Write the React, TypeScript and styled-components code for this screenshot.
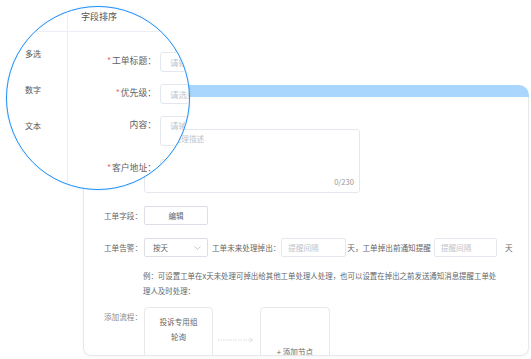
import React from "react";
import styled, { createGlobalStyle } from "styled-components";

const Global = createGlobalStyle`
  html, body { margin: 0; padding: 0; background: #fff; }
  body { font-family: "Noto Sans CJK SC", "Noto Sans", sans-serif; }
  * { box-sizing: border-box; }
`;

const Stage = styled.div`
  position: relative;
  width: 531px;
  height: 359px;
  overflow: hidden;
  padding: 85px 0 0 83px;
`;

const Card = styled.div`
  width: 446px;
  display: flex;
  flex-direction: column;
`;

const CardBar = styled.div`
  height: 12px;
  background: #a9d6fd;
  border-radius: 10px 10px 0 0;
`;

const CardBody = styled.div`
  height: 259px;
  border: 1px solid #e8e8e8;
  border-top: none;
  border-radius: 0 0 8px 8px;
  box-shadow: 0 1px 3px rgba(0, 0, 0, 0.04);
  overflow: hidden;
  padding-top: 32px;
  display: flex;
  flex-direction: column;
  font-size: 7.6px;
  color: #666;
`;

const Row = styled.div<{ $top?: number }>`
  display: flex;
  align-items: flex-start;
  margin-top: ${(p) => p.$top ?? 0}px;
  white-space: nowrap;
`;

const Label = styled.div<{ $muted?: boolean; $lh?: number }>`
  width: 60px;
  flex: none;
  text-align: right;
  padding-right: 2px;
  line-height: ${(p) => p.$lh ?? 19}px;
  color: ${(p) => (p.$muted ? "#8a8a8a" : "#666")};
`;

const TextArea = styled.div`
  width: 216px;
  height: 64px;
  border: 1px solid #e4e7ed;
  border-radius: 3px;
  padding: 3px 5px 5px 6px;
  display: flex;
  flex-direction: column;
  justify-content: space-between;
  line-height: 11px;
`;

const Placeholder = styled.span`
  color: #c0c4cc;
`;

const Counter = styled.span`
  align-self: flex-end;
  color: #999;
`;

const Button = styled.div`
  width: 64px;
  height: 19px;
  border: 1px solid #dcdfe6;
  border-radius: 2px;
  display: flex;
  align-items: center;
  justify-content: center;
  color: #666;
`;

const Select = styled.div`
  width: 64px;
  height: 19px;
  border: 1px solid #dcdfe6;
  border-radius: 2px;
  display: flex;
  align-items: center;
  justify-content: space-between;
  padding: 0 6px 0 8px;
  color: #666;
`;

const InlineText = styled.span<{ $ml: number }>`
  line-height: 19px;
  margin-left: ${(p) => p.$ml}px;
  color: #666;
`;

const Input = styled.div<{ $w: number; $ml: number }>`
  width: ${(p) => p.$w}px;
  margin-left: ${(p) => p.$ml}px;
  height: 19px;
  border: 1px solid #e4e7ed;
  border-radius: 2px;
  padding-left: 6px;
  line-height: 17px;
  color: #c0c4cc;
`;

const Note = styled.div`
  margin-top: 11px;
  padding-left: 59px;
  line-height: 15px;
  font-size: 7.45px;
  white-space: nowrap;
  color: #666;
`;

const Node = styled.div<{ $w: number; $ml?: number; $center?: boolean }>`
  width: ${(p) => p.$w}px;
  margin-left: ${(p) => p.$ml ?? 0}px;
  height: 88px;
  flex: none;
  border: 1px solid #e8e8e8;
  border-radius: 4px;
  display: flex;
  flex-direction: column;
  align-items: center;
  justify-content: ${(p) => (p.$center ? "center" : "flex-start")};
  padding-top: ${(p) => (p.$center ? 0 : 6)}px;
  line-height: 15px;
  color: #666;
`;

const Arrow = styled.svg`
  margin-left: 5px;
  margin-top: 30px;
  flex: none;
`;

/* ---------- magnifier ---------- */

const Lens = styled.div`
  position: absolute;
  left: 6px;
  top: 6px;
  width: 184px;
  height: 184px;
  border-radius: 50%;
  border: 1.5px solid #2190f7;
  background: #fff;
  overflow: hidden;
  z-index: 2;
  display: flex;
  flex-direction: column;
  box-shadow: 0 0 2px rgba(33, 144, 247, 0.25);
  color: #606266;
`;

const LensHeader = styled.div`
  height: 25px;
  flex: none;
  display: flex;
  border-bottom: 1px solid #ebeef5;
`;

const LensSide = styled.div`
  width: 61px;
  flex: none;
  border-right: 1px solid #ebeef5;
`;

const LensTitle = styled.div`
  padding-left: 13px;
  line-height: 19px;
  font-size: 9px;
  color: #555;
`;

const LensBody = styled.div`
  flex: 1;
  display: flex;
`;

const LensList = styled(LensSide)`
  padding: 4px 0 0 18px;
  display: flex;
  flex-direction: column;
`;

const LensItem = styled.div`
  height: 36px;
  line-height: 36px;
  font-size: 8px;
  color: #555;
`;

const LensForm = styled.div`
  padding-top: 19.5px;
  display: flex;
  flex-direction: column;
`;

const LensRow = styled.div<{ $mb?: number }>`
  display: flex;
  align-items: flex-start;
  margin-bottom: ${(p) => p.$mb ?? 12}px;
  white-space: nowrap;
`;

const LensLabel = styled.div`
  width: 88px;
  flex: none;
  text-align: right;
  font-size: 8.8px;
  line-height: 18px;
  color: #606266;
`;

const Star = styled.span`
  color: #f56c6c;
  margin-right: 1px;
`;

const LensInput = styled.div<{ $h: number }>`
  margin-left: 4px;
  width: 90px;
  height: ${(p) => p.$h}px;
  flex: none;
  border: 1px solid #e4e7ed;
  border-radius: 3px;
  padding: 1px 0 0 9px;
  font-size: 8.5px;
  line-height: ${(p) => (p.$h > 20 ? 14 : 17)}px;
  color: #c0c4cc;
`;

const Chevron = () => (
  <svg width="7" height="4" viewBox="0 0 7 4">
    <path d="M0.5 0.5 L3.5 3.3 L6.5 0.5" fill="none" stroke="#b8bcc4" strokeWidth="0.8" />
  </svg>
);

export default function App() {
  return (
    <>
      <Global />
      <Stage>
        <Card>
          <CardBar />
          <CardBody>
            <Row>
              <Label>内容：</Label>
              <TextArea>
                <Placeholder>请输入处理描述</Placeholder>
                <Counter>0/230</Counter>
              </TextArea>
            </Row>
            <Row $top={13}>
              <Label>工单字段：</Label>
              <Button>编辑</Button>
            </Row>
            <Row $top={13}>
              <Label>工单告警：</Label>
              <Select>
                <span>按天</span>
                <Chevron />
              </Select>
              <InlineText $ml={4}>工单未来处理掉出：</InlineText>
              <Input $w={65} $ml={1}>提醒间隔</Input>
              <InlineText $ml={1}>天，工单掉出前通知提醒</InlineText>
              <Input $w={63} $ml={3}>提醒间隔</Input>
              <InlineText $ml={8}>天</InlineText>
            </Row>
            <Note>
              例：可设置工单在x天未处理可掉出给其他工单处理人处理，也可以设置在掉出之前发送通知消息提醒工单处
              <br />
              理人及时处理：
            </Note>
            <Row $top={9}>
              <Label $muted $lh={20}>添加流程：</Label>
              <Node $w={69}>
                <span>投诉专用组</span>
                <span>轮询</span>
              </Node>
              <Arrow width="36" height="6" viewBox="0 0 36 6">
                <line x1="0" y1="3" x2="34" y2="3" stroke="#d4d4d4" strokeWidth="0.8" strokeDasharray="1.5 1" />
                <path d="M31.5 0.8 L34.5 3 L31.5 5.2" fill="none" stroke="#d4d4d4" strokeWidth="0.8" />
              </Arrow>
              <Node $w={70} $ml={6} $center>
                <span>+ 添加节点</span>
              </Node>
            </Row>
          </CardBody>
        </Card>

        <Lens>
          <LensHeader>
            <LensSide />
            <LensTitle>字段排序</LensTitle>
          </LensHeader>
          <LensBody>
            <LensList>
              <LensItem>多选</LensItem>
              <LensItem>数字</LensItem>
              <LensItem>文本</LensItem>
            </LensList>
            <LensForm>
              <LensRow>
                <LensLabel>
                  <Star>*</Star>工单标题：
                </LensLabel>
                <LensInput $h={20}>请输入</LensInput>
              </LensRow>
              <LensRow>
                <LensLabel>
                  <Star>*</Star>优先级：
                </LensLabel>
                <LensInput $h={20}>请选择</LensInput>
              </LensRow>
              <LensRow $mb={13}>
                <LensLabel>内容：</LensLabel>
                <LensInput $h={30}>请输入</LensInput>
              </LensRow>
              <LensRow>
                <LensLabel>
                  <Star>*</Star>客户地址：
                </LensLabel>
                <LensInput $h={20} />
              </LensRow>
            </LensForm>
          </LensBody>
        </Lens>
      </Stage>
    </>
  );
}
